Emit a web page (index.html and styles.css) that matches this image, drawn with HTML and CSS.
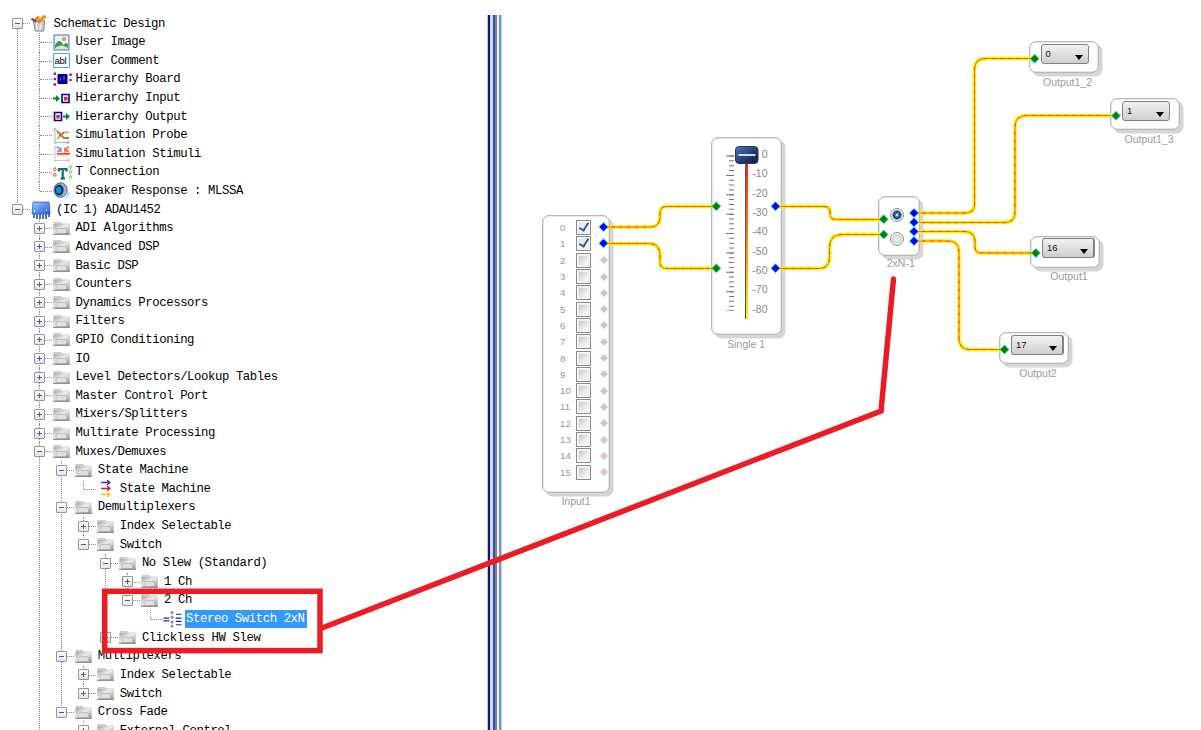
FILE: index.html
```html
<!DOCTYPE html>
<html lang="en">
<head>
  <meta charset="UTF-8" />
  <title>Schematic Design</title>
  <link rel="stylesheet" href="styles.css">
</head>
<body>

  <!-- Shared icons -->
  <svg class="defs" width="0" height="0">
    <defs>
      <linearGradient id="folderFill" x1="0" y1="0" x2="1" y2="1">
        <stop offset="0" stop-color="#a4a4a4" />
        <stop offset="0.45" stop-color="#ececec" />
        <stop offset="1" stop-color="#989898" />
      </linearGradient>
      <linearGradient id="chipFill" x1="0" y1="0" x2="1" y2="1">
        <stop offset="0" stop-color="#a4ccff" />
        <stop offset="1" stop-color="#1a5cd8" />
      </linearGradient>
      <linearGradient id="trackFill" x1="0" y1="0" x2="0" y2="1">
        <stop offset="0" stop-color="#ff2020" />
        <stop offset="0.5" stop-color="#ff8c00" />
        <stop offset="1" stop-color="#fff200" />
      </linearGradient>
      <linearGradient id="knobFill" x1="0" y1="0" x2="1" y2="1">
        <stop offset="0" stop-color="#4a78c0" />
        <stop offset="0.6" stop-color="#223a68" />
        <stop offset="1" stop-color="#101a38" />
      </linearGradient>
      <symbol id="folder" viewBox="0 0 17 14">
        <path d="M0.500 0.500h7.500l1 1.500h7.500v11h-16z" fill="#cccccc" />
        <path d="M0.500 2.500h16v10h-16z" fill="url(#folderFill)" />
        <path d="M3 9l1-2h8.500l1 2v3h-10.500z" fill="#e0e0e0" stroke="#a8a8a8" stroke-width="0.6" />
        <path d="M0 12.800h17" stroke="#7c7c7c" />
      </symbol>
      <symbol id="pinOff" viewBox="0 0 10 10">
        <path d="M5 1l4 4-4 4-4-4z" fill="#d8bfd8" />
      </symbol>
    </defs>
  </svg>

  <div class="workspace">
    <div class="toolbox">
      <ul class="tree">
        <li>
          <div class="row"><span class="toggle"></span>
            <svg class="icon" viewBox="0 0 17 18"><path d="M2 6l12 0-1 11h-9z" fill="#c8ccce" stroke="#7c8286" /><path d="M5 8l1 8M10 8l-1 8" stroke="#fff" /><path d="M3 7L8 2M7 8l8-7" stroke="#ee7818" stroke-width="3.4" /><path d="M5 7l4-5M10 6l5-4" stroke="#ffd060" /><path d="M0 4l5 3" stroke="#555" stroke-width="2.4" /></svg>
            <span class="name">Schematic Design</span></div>
          <ul>
            <li><div class="row leaf">
              <svg class="icon" viewBox="0 0 17 17"><path d="M1 1h15v15h-15z" fill="#e8f2fc" stroke="#4670a8" /><path d="M2 11q5-8 8 0l3-2 2 1v5h-13z" fill="#3f9a50" /><path d="M2 14q6-5 13 0v1h-13z" fill="#d6ead0" /><circle cx="11" cy="5" r="2.2" fill="#f09868" /></svg>
              <span class="name">User Image</span></div></li>
            <li><div class="row leaf">
              <svg class="icon" viewBox="0 0 17 17"><path d="M.5 1.500h16v14h-16z" fill="#fff" stroke="#5b9bd8" /><text class="abl" x="1.400" y="12">abl</text></svg>
              <span class="name">User Comment</span></div></li>
            <li><div class="row leaf">
              <svg class="icon wide" viewBox="0 0 20 14"><path d="M5 2h9v9h-9z" fill="#0000b8" stroke="#000050" /><path d="M7.500 6v2M11 4v3" stroke="#6080ff" /><path d="M1.800 0v14" stroke="#b000c0" stroke-width="2.4" stroke-dasharray="2.4 3" /><path d="M17.500 1v10" stroke="#b000c0" stroke-width="2.4" stroke-dasharray="2.4 3" /></svg>
              <span class="name">Hierarchy Board</span></div></li>
            <li><div class="row leaf">
              <svg class="icon" viewBox="0 0 17 14"><path d="M0 6h3v-2.500l4 3.500-4 3.500v-2.500h-3z" fill="#008a10" /><path d="M9 3h7v8h-7z" fill="#fff" stroke="#000090" stroke-width="1.6" /><path d="M11 5.500h3.500v3.500h-3.500z" fill="#f02020" /></svg>
              <span class="name">Hierarchy Input</span></div></li>
            <li><div class="row leaf">
              <svg class="icon" viewBox="0 0 17 14"><path d="M1.500 3h7v8h-7z" fill="#fff" stroke="#000090" stroke-width="1.6" /><path d="M3.300 5.500h3.500v3.500h-3.500z" fill="#f02020" /><path d="M10 6h3v-2.500l4 3.500-4 3.500v-2.500h-3z" fill="#008a10" /></svg>
              <span class="name">Hierarchy Output</span></div></li>
            <li><div class="row leaf">
              <svg class="icon" viewBox="0 0 17 17" fill="none"><path d="M2 17V2M0 4l2-3 2 3M1 15.500h15M13.500 13l3 2.500-3 1.500" stroke="#88c4c8" /><path d="M4 4l7 7h5" stroke="#b08818" stroke-width="2" /><path d="M4 12l4-4q2-3 8-3" stroke="#f09030" stroke-width="1.6" /><path d="M6 9l5-4" stroke="#b02880" /></svg>
              <span class="name">Simulation Probe</span></div></li>
            <li><div class="row leaf">
              <svg class="icon" viewBox="0 0 17 17" fill="none"><path d="M2 17V2M0 4l2-3 2 3M1 15.500h15M13.500 13l3 2.500-3 1.500" stroke="#c8c8c8" /><path d="M4 8.700h13" stroke="#d83030" stroke-width="1.6" /><path d="M4 1.500l4 4M8 2.500v3.500h-4" stroke="#8878e0" stroke-width="1.3" /><path d="M16 1.500l-4 4M12 2.500v3.500h4" stroke="#f06020" stroke-width="1.5" /><path d="M4 10.200h12" stroke="#e8c040" /></svg>
              <span class="name">Simulation Stimuli</span></div></li>
            <li><div class="row leaf">
              <svg class="icon wide" viewBox="0 0 20 15" fill="none"><path d="M1.800 2.500l1.500 1.800-1.500 1.800-1.500-1.800zM1.800 8l1.500 1.800-1.500 1.800-1.500-1.800z" stroke="#f03030" stroke-width="1" /><path d="M17.500 0.500l1.500 1.600-1.500 1.600-1.500-1.600zM17.500 5.500l1.500 1.600-1.500 1.600-1.500-1.600zM17.500 10.500l1.500 1.600-1.500 1.600-1.500-1.600z" stroke="#40d060" stroke-width="1" /><path d="M6 6.500V4h7.500v2.500M9.700 4v9M7.500 13.500h4.500" stroke="#087070" stroke-width="2.200" /></svg>
              <span class="name">T Connection</span></div></li>
            <li><div class="row leaf">
              <svg class="icon speaker" viewBox="0 0 18 18"><ellipse cx="8" cy="8" rx="7" ry="7.700" fill="#9cb4c8" stroke="#455a6c" /><ellipse cx="6.500" cy="8" rx="4.800" ry="5.800" fill="#0f3c68" /><ellipse cx="6" cy="8" rx="2.800" ry="3.500" fill="#1590d8" /><path d="M17 10q0 5-4 7M14.500 10q0 3-3 5" fill="none" stroke="#88b0f0" /></svg>
              <span class="name">Speaker Response : MLSSA</span></div></li>
          </ul>
        </li>
        <li>
          <div class="row chip"><span class="toggle"></span>
            <svg class="icon wide" viewBox="0 0 20 18"><path d="M3 12v5M6 13v5M9 13v5M12 13v5M15 13v5M18 11v5" stroke="#224488" stroke-width="1.5" /><path d="M2 1h16l1 12h-18z" fill="url(#chipFill)" stroke="#2860c8" stroke-width=".8" /><path d="M3 10h1M15 9h1" stroke="#fff" stroke-width="1.500" /></svg>
            <span class="name">(IC 1) ADAU1452</span></div>
          <ul>
            <li><div class="row"><span class="toggle plus"></span><svg class="icon"><use href="#folder" /></svg><span class="name">ADI Algorithms</span></div></li>
            <li><div class="row"><span class="toggle plus"></span><svg class="icon"><use href="#folder" /></svg><span class="name">Advanced DSP</span></div></li>
            <li><div class="row"><span class="toggle plus"></span><svg class="icon"><use href="#folder" /></svg><span class="name">Basic DSP</span></div></li>
            <li><div class="row"><span class="toggle plus"></span><svg class="icon"><use href="#folder" /></svg><span class="name">Counters</span></div></li>
            <li><div class="row"><span class="toggle plus"></span><svg class="icon"><use href="#folder" /></svg><span class="name">Dynamics Processors</span></div></li>
            <li><div class="row"><span class="toggle plus"></span><svg class="icon"><use href="#folder" /></svg><span class="name">Filters</span></div></li>
            <li><div class="row"><span class="toggle plus"></span><svg class="icon"><use href="#folder" /></svg><span class="name">GPIO Conditioning</span></div></li>
            <li><div class="row"><span class="toggle plus"></span><svg class="icon"><use href="#folder" /></svg><span class="name">IO</span></div></li>
            <li><div class="row"><span class="toggle plus"></span><svg class="icon"><use href="#folder" /></svg><span class="name">Level Detectors/Lookup Tables</span></div></li>
            <li><div class="row"><span class="toggle plus"></span><svg class="icon"><use href="#folder" /></svg><span class="name">Master Control Port</span></div></li>
            <li><div class="row"><span class="toggle plus"></span><svg class="icon"><use href="#folder" /></svg><span class="name">Mixers/Splitters</span></div></li>
            <li><div class="row"><span class="toggle plus"></span><svg class="icon"><use href="#folder" /></svg><span class="name">Multirate Processing</span></div></li>
            <li class="more">
              <div class="row"><span class="toggle"></span><svg class="icon"><use href="#folder" /></svg><span class="name">Muxes/Demuxes</span></div>
              <ul>
                <li>
                  <div class="row"><span class="toggle"></span><svg class="icon"><use href="#folder" /></svg><span class="name">State Machine</span></div>
                  <ul>
                    <li><div class="row leaf">
                      <svg class="icon" viewBox="0 0 17 17" fill="none"><path d="M4 2.500h9M10 0l3 2.500-3 2.500" stroke="#4828b8" stroke-width="1.300" /><path d="M4 8.500h9M10 6l3 2.500-3 2.500" stroke="#b82050" stroke-width="1.300" /><path d="M4 14.500h9M10 12l3 2.500-3 2.500" stroke="#f8c810" stroke-width="1.300" /></svg>
                      <span class="name">State Machine</span></div></li>
                  </ul>
                </li>
                <li>
                  <div class="row"><span class="toggle"></span><svg class="icon"><use href="#folder" /></svg><span class="name">Demultiplexers</span></div>
                  <ul>
                    <li><div class="row"><span class="toggle plus"></span><svg class="icon"><use href="#folder" /></svg><span class="name">Index Selectable</span></div></li>
                    <li>
                      <div class="row"><span class="toggle"></span><svg class="icon"><use href="#folder" /></svg><span class="name">Switch</span></div>
                      <ul>
                        <li>
                          <div class="row"><span class="toggle"></span><svg class="icon"><use href="#folder" /></svg><span class="name">No Slew (Standard)</span></div>
                          <ul>
                            <li><div class="row"><span class="toggle plus"></span><svg class="icon"><use href="#folder" /></svg><span class="name">1 Ch</span></div></li>
                            <li>
                              <div class="row"><span class="toggle"></span><svg class="icon"><use href="#folder" /></svg><span class="name">2 Ch</span></div>
                              <ul>
                                <li><div class="row leaf">
                                  <svg class="icon wide" viewBox="0 0 20 18" fill="none"><path d="M0 7.500h6M0 10.500h6M13 3.500h6M13 7.500h6M13 11h6M13 14.500h6" stroke="#20209c" stroke-width="1.200" /><path d="M9 0l1.500 1.700-1.500 1.700-1.500-1.700zM9 5l1.500 1.700-1.500 1.700-1.500-1.700zM9 10l1.500 1.700-1.500 1.700-1.500-1.700zM9 14.500l1.500 1.500-1.500 1.500-1.500-1.500z" fill="#999" stroke="#555" stroke-width=".5" /></svg>
                                  <span class="name selected">Stereo Switch 2xN</span></div></li>
                              </ul>
                            </li>
                          </ul>
                        </li>
                        <li><div class="row"><span class="toggle plus"></span><svg class="icon"><use href="#folder" /></svg><span class="name">Clickless HW Slew</span></div></li>
                      </ul>
                    </li>
                  </ul>
                </li>
                <li>
                  <div class="row"><span class="toggle"></span><svg class="icon"><use href="#folder" /></svg><span class="name">Multiplexers</span></div>
                  <ul>
                    <li><div class="row"><span class="toggle plus"></span><svg class="icon"><use href="#folder" /></svg><span class="name">Index Selectable</span></div></li>
                    <li><div class="row"><span class="toggle plus"></span><svg class="icon"><use href="#folder" /></svg><span class="name">Switch</span></div></li>
                  </ul>
                </li>
                <li>
                  <div class="row"><span class="toggle"></span><svg class="icon"><use href="#folder" /></svg><span class="name">Cross Fade</span></div>
                  <ul>
                    <li><div class="row"><span class="toggle plus"></span><svg class="icon"><use href="#folder" /></svg><span class="name">External Control</span></div></li>
                  </ul>
                </li>
              </ul>
            </li>
          </ul>
        </li>
      </ul>
    </div>

    <div class="splitter"></div>

    <div class="schematic">
      <div class="block input1">
        <div class="channel"><span>0</span><i class="check on"></i></div>
        <div class="channel"><span>1</span><i class="check on"></i></div>
        <div class="channel"><span>2</span><i class="check"></i><svg><use href="#pinOff" /></svg></div>
        <div class="channel"><span>3</span><i class="check"></i><svg><use href="#pinOff" /></svg></div>
        <div class="channel"><span>4</span><i class="check"></i><svg><use href="#pinOff" /></svg></div>
        <div class="channel"><span>5</span><i class="check"></i><svg><use href="#pinOff" /></svg></div>
        <div class="channel"><span>6</span><i class="check"></i><svg><use href="#pinOff" /></svg></div>
        <div class="channel"><span>7</span><i class="check"></i><svg><use href="#pinOff" /></svg></div>
        <div class="channel"><span>8</span><i class="check"></i><svg><use href="#pinOff" /></svg></div>
        <div class="channel"><span>9</span><i class="check"></i><svg><use href="#pinOff" /></svg></div>
        <div class="channel"><span>10</span><i class="check"></i><svg><use href="#pinOff" /></svg></div>
        <div class="channel"><span>11</span><i class="check"></i><svg><use href="#pinOff" /></svg></div>
        <div class="channel"><span>12</span><i class="check"></i><svg><use href="#pinOff" /></svg></div>
        <div class="channel"><span>13</span><i class="check"></i><svg><use href="#pinOff" /></svg></div>
        <div class="channel"><span>14</span><i class="check"></i><svg><use href="#pinOff" /></svg></div>
        <div class="channel"><span>15</span><i class="check"></i><svg><use href="#pinOff" /></svg></div>
        <div class="caption">Input1</div>
      </div>

      <div class="block single1">
        <svg class="fader" viewBox="0 0 40 190">
          <path d="M15.500 14.500V170" stroke="#777" stroke-width="5" stroke-dasharray="1 3.844" />
          <path d="M14 14.500V170" stroke="#777" stroke-width="8" stroke-dasharray="1 18.375" />
          <rect x="29" y="22" width="1" height="156" fill="#555" />
          <rect x="30" y="22" width="2" height="156" fill="url(#trackFill)" />
        </svg>
        <svg class="knob" viewBox="0 0 24 18"><rect x="0.500" y="0.500" width="22.500" height="17" rx="3.500" fill="url(#knobFill)" stroke="#24385e" /><path d="M3.500 9h17" stroke="#fff" stroke-width="1.600" /></svg>
        <div class="scale">
          <span>0</span><span>-10</span><span>-20</span><span>-30</span><span>-40</span><span>-50</span><span>-60</span><span>-70</span><span>-80</span>
        </div>
        <div class="caption">Single 1</div>
      </div>

      <div class="block mux">
        <i class="radio on"></i>
        <i class="radio"></i>
        <div class="caption">2xN-1</div>
      </div>

      <div class="block output output1-2">
        <div class="select">0</div>
        <div class="caption">Output1_2</div>
      </div>
      <div class="block output output1-3">
        <div class="select">1</div>
        <div class="caption">Output1_3</div>
      </div>
      <div class="block output output1">
        <div class="select long">16</div>
        <div class="caption">Output1</div>
      </div>
      <div class="block output output2">
        <div class="select long">17</div>
        <div class="caption">Output2</div>
      </div>

      <svg class="wires" viewBox="502 0 699 730" fill="none">
        <defs>
          <g id="wireSet">
            <path d="M603 227H650Q660 227 660 217V213Q660 206.500 667 206.500H716" />
            <path d="M603 243.500H648Q660 243.500 660 255V262Q660 268.500 667 268.500H716" />
            <path d="M775 206.500H824Q830 206.500 830 212V214Q830 219.500 836 219.500H883" />
            <path d="M775 268.500H819Q829.500 268.500 829.500 257V248Q829.500 234.500 842 234.500H883" />
            <path d="M914 213H965Q974.500 213 974.500 204V70Q974.500 58.500 986 58.500H1034" />
            <path d="M914 222.500H1004Q1015 222.500 1015 212V127Q1015 115.500 1027 115.500H1116" />
            <path d="M914 231.500H964Q975 231.500 975 242V246Q975 253 981 253H1035" />
            <path d="M914 241H948Q959 241 959 252V338Q959 349.500 970 349.500H1004" />
          </g>
          <g id="pinIn">
            <path d="M0-5l5 5-5 5-5-5z" fill="#38d8a8" />
            <path d="M0-3.900l3.900 3.900-3.900 3.900-3.900-3.900z" fill="#008000" />
          </g>
          <g id="pinSrc">
            <path d="M0-5l5 5-5 5-5-5z" fill="#30c8ff" />
            <path d="M0-4l4 4-4 4-4-4z" fill="#0000ff" />
          </g>
        </defs>
        <use href="#wireSet" stroke="#ffee00" stroke-width="3.400" />
        <use href="#wireSet" stroke="#ffa000" stroke-width="1" />
        <use href="#wireSet" stroke="#f04800" stroke-width="1" stroke-dasharray="4 1.500 1 1.500" />

        <use href="#pinSrc" x="603.500" y="227" />
        <use href="#pinSrc" x="603.500" y="243.200" />
        <use href="#pinIn" x="716.300" y="206.300" />
        <use href="#pinIn" x="716.300" y="268.300" />
        <use href="#pinSrc" x="775.500" y="206.300" />
        <use href="#pinSrc" x="775.500" y="268.300" />
        <use href="#pinIn" x="883.700" y="219.200" />
        <use href="#pinIn" x="883.700" y="234.600" />
        <use href="#pinSrc" x="914" y="213" />
        <use href="#pinSrc" x="914" y="222.300" />
        <use href="#pinSrc" x="914" y="231.600" />
        <use href="#pinSrc" x="914" y="241" />
        <use href="#pinIn" x="1034.700" y="58.700" />
        <use href="#pinIn" x="1116" y="115.700" />
        <use href="#pinIn" x="1035.800" y="253" />
        <use href="#pinIn" x="1004.500" y="349.500" />
      </svg>
    </div>
  </div>

  <!-- Red callout from the tree item to the mux block -->
  <svg class="callout" viewBox="0 0 1201 730" fill="none" stroke="#ed1c24" stroke-width="5.500">
    <rect x="104.700" y="591.300" width="215.300" height="59.300" />
    <path d="M322 628L881 411L893.500 279" stroke-width="5.500" stroke-linecap="round" />
  </svg>

</body>
</html>
```
FILE: styles.css
```css
body {
  margin: 0;
  height: 730px;
  overflow: hidden;
  background-color: #fff;
  font-family: "Liberation Sans", Arial, sans-serif;
}

ul {
  list-style: none;
  margin: 0;
  padding: 0;
}

.defs {
  position: absolute;
}

.workspace {
  display: flex;
  height: 730px;
}

/* Tree */
.toolbox {
  width: 487px;
  flex: none;
  overflow: hidden;
}

.tree {
  padding: 14.3px 0 0 12px;
  font-family: "Liberation Mono", "Courier New", monospace;
  font-size: 12.3px;
  letter-spacing: -0.41px;
  color: #000;
}

.tree ul {
  padding-left: 22.1px;
}

.tree li {
  position: relative;
}

.tree li::before {
  content: "";
  position: absolute;
  left: 5px;
  top: 0;
  bottom: 0;
  border-left: 1px dotted #8c8c8c;
}

.tree > li:first-child::before {
  top: 9px;
}

.tree li:last-child::before {
  bottom: auto;
  height: 9px;
}

.tree li.more::before {
  height: auto;
  bottom: 0;
}

.row {
  position: relative;
  display: flex;
  align-items: center;
  height: 18.62px;
  white-space: pre;
}

.row::before {
  content: "";
  position: absolute;
  left: 11px;
  top: 9px;
  width: 7px;
  border-top: 1px dotted #8c8c8c;
}

.row.leaf {
  padding-left: 18.5px;
}

.row.leaf::before {
  left: 6px;
  width: 12px;
}

.toggle {
  position: relative;
  box-sizing: border-box;
  width: 11px;
  height: 11px;
  margin-right: 7.5px;
  flex: none;
  border: 1px solid #969696;
  border-radius: 1px;
  background: linear-gradient(#fff, #e4e4e4);
}

.toggle::before,
.toggle.plus::after {
  content: "";
  position: absolute;
  left: 2px;
  top: 4px;
  width: 5px;
  height: 1px;
  background-color: #3c5cb8;
}

.toggle.plus::after {
  left: 4px;
  top: 2px;
  width: 1px;
  height: 5px;
}

.icon {
  width: 17px;
  height: 17px;
  margin-right: 6px;
  flex: none;
}

.icon.wide {
  width: 20px;
  height: 17px;
  margin-right: 3px;
}

.icon.speaker {
  height: 18px;
}

.chip .icon.wide {
  margin-right: 5.5px;
  height: 18px;
}

.abl {
  font-family: "Liberation Sans", Arial, sans-serif;
  font-size: 9.5px;
  letter-spacing: -0.2px;
  fill: #000;
}

.name {
  line-height: 18px;
}

.name.selected {
  background-color: #3399ff;
  color: #fff;
  padding: 0 2px 0 1px;
  margin-left: -1px;
}

/* Splitter between tree and schematic */
.splitter {
  width: 15px;
  flex: none;
  margin-top: 15px;
  background: linear-gradient(90deg,
    #c4c4cc 0 1.5px,
    #101870 1.5px 3px,
    #c8dcf8 3px 6px,
    #4848a8 6px 8px,
    #808080 8px 10px,
    #eef2f8 10px 12px,
    #7098cc 12px 14.2px,
    #c8ccd4 14.2px 15px);
}

/* Schematic canvas */
.schematic {
  position: relative;
  flex: 1;
}

.wires {
  position: absolute;
  left: 0;
  top: 0;
  width: 699px;
  height: 730px;
}

.block {
  position: absolute;
  box-sizing: border-box;
  border: 1.5px solid #b8b8b8;
  border-radius: 7px;
  background-color: #fff;
  box-shadow: inset 0 0 0 0.5px #d0d0d0, 3.5px 3.5px 0.5px #d6d6d6;
}

.caption {
  position: absolute;
  left: -10px;
  right: -10px;
  top: 100%;
  margin-top: 3.5px;
  text-align: center;
  font-size: 10.5px;
  line-height: 13px;
  color: #9c9c9c;
}

.input1 {
  left: 40px;
  top: 214.5px;
  width: 68px;
  height: 278px;
  padding: 4px 0 0 17px;
}

.channel {
  display: flex;
  align-items: center;
  height: 16.3px;
  font-size: 9.7px;
  color: #999;
}

.channel span {
  width: 16px;
}

.channel svg {
  width: 10px;
  height: 10px;
  margin-left: 7.5px;
}

.check {
  position: relative;
  box-sizing: border-box;
  width: 15px;
  height: 15px;
  flex: none;
  border: 1px solid #8a8a8a;
  background: linear-gradient(135deg, #c4c8d0, #fff) center / 9px 9px no-repeat #ededed;
  box-shadow: inset 0 0 0 1px #f8f8f8;
}

.check.on {
  background-image: linear-gradient(135deg, #e0e4ec, #fff);
}

.check.on::after {
  content: "";
  position: absolute;
  left: 4px;
  top: 0;
  width: 4px;
  height: 8px;
  border: solid #3c58a0;
  border-width: 0 2px 2px 0;
  transform: rotate(32deg);
}

.single1 {
  left: 208.5px;
  top: 136.5px;
  width: 71.5px;
  height: 198.5px;
}

.fader {
  position: absolute;
  left: 4px;
  top: 3px;
  width: 40px;
  height: 190px;
}

.knob {
  position: absolute;
  left: 23px;
  top: 8px;
  width: 24px;
  height: 18px;
}

.scale {
  display: flex;
  flex-direction: column;
  align-items: flex-end;
  padding: 7.5px 13.5px 0 0;
  font-size: 10.5px;
  line-height: 19.35px;
  color: #888;
}

.mux {
  left: 375.5px;
  top: 196px;
  width: 42.5px;
  height: 59.5px;
  display: flex;
  flex-direction: column;
  gap: 10px;
  padding: 10.5px 0 0 11px;
}

.mux .caption {
  left: -8px;
  right: -12px;
  margin-top: 2px;
}

.radio {
  box-sizing: border-box;
  width: 14px;
  height: 14px;
  border: 1px solid #909090;
  border-radius: 50%;
  background: radial-gradient(circle, #e8e8e8 0 35%, #cfcfcf 45%, #fff 75%);
}

.radio.on {
  background: radial-gradient(circle at 50% 50%, #b8e8f8 0 8%, #2888b8 20%, #183860 42%, #e4e4e4 60%, #fff 75%);
}

.output {
  width: 70px;
  height: 32px;
  padding: 1.5px 0 0 11px;
}

.output .caption {
  left: 0;
  right: -8px;
}

.output1-2 {
  left: 526.5px;
  top: 41px;
}

.output1-3 {
  left: 608px;
  top: 98px;
}

.output1 {
  left: 528px;
  top: 235.5px;
}

.output2 {
  left: 497px;
  top: 332px;
}

.select {
  position: relative;
  box-sizing: border-box;
  width: 48px;
  height: 20px;
  padding-left: 4px;
  border: 1.5px solid #808080;
  border-radius: 3px;
  background: linear-gradient(#f2f2f2, #cecece);
  font-size: 9.5px;
  line-height: 17px;
  color: #111;
}

.select.long {
  width: 53px;
  border-right-width: 2px;
}

.select::after {
  content: "";
  position: absolute;
  right: 5px;
  top: 10px;
  border: 4.5px solid transparent;
  border-top: 5px solid #000;
  border-bottom: 0;
}

/* Callout drawing over everything */
.callout {
  position: absolute;
  left: 0;
  top: 0;
  width: 1201px;
  height: 730px;
  pointer-events: none;
}
```
